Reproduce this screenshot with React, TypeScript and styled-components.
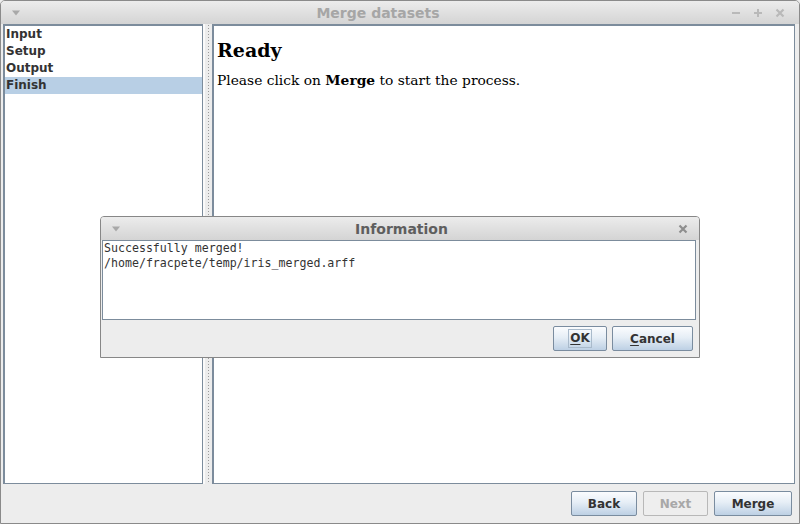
import React from "react";
import styled, { createGlobalStyle } from "styled-components";

const Global = createGlobalStyle`
  html, body { margin: 0; padding: 0; background: #ededed; }
  * { box-sizing: border-box; }
`;

const Window = styled.div`
  position: relative;
  width: 800px;
  height: 524px;
  display: flex;
  flex-direction: column;
  background: #ededed;
  border: 1px solid #8a8a8a;
  border-radius: 5px 5px 0 0;
  overflow: hidden;
  font-family: "DejaVu Sans", sans-serif;
`;

const TitleBar = styled.div<{ $h: number }>`
  height: ${(p) => p.$h}px;
  flex: none;
  display: flex;
  align-items: center;
  background: linear-gradient(#ececec, #d4d4d4);
`;

const MenuSlot = styled.div`
  width: 30px;
  flex: none;
  display: flex;
  justify-content: center;
  align-items: center;
`;

const Title = styled.div<{ $active?: boolean }>`
  flex: 1;
  text-align: center;
  font-size: 14px;
  font-weight: bold;
  color: ${(p) => (p.$active ? "#5e5e5e" : "#a6a6a6")};
  white-space: nowrap;
`;

const Controls = styled.div<{ $pr: number }>`
  flex: none;
  display: flex;
  padding-right: ${(p) => p.$pr}px;
`;

const CtrlBtn = styled.div`
  width: 22px;
  height: 22px;
  display: flex;
  align-items: center;
  justify-content: center;
`;

const Body = styled.div`
  height: 460px;
  flex: none;
  display: flex;
  padding: 0 4px 0 2px;
`;

const ListPanel = styled.div`
  width: 200px;
  flex: none;
  background: #fff;
  border: 1px solid #7c8c9c;
  border-left-width: 2px;
  border-top-width: 2px;
`;

const ListItem = styled.div<{ $selected?: boolean }>`
  height: 17px;
  line-height: 17px;
  padding-left: 1px;
  font-size: 12px;
  font-weight: bold;
  color: #333;
  background: ${(p) => (p.$selected ? "#b8cfe5" : "transparent")};
`;

const Divider = styled.div`
  width: 9px;
  flex: none;
  border-left: 2px solid #fafafa;
  display: flex;
  justify-content: center;
  background: #ececec;
`;

const Dots = styled.div`
  width: 1px;
  margin-left: -1px;
  background: repeating-linear-gradient(to bottom, transparent 0 1px, #9a9a9a 1px 2px, transparent 2px 3px);
`;

const ContentPanel = styled.div`
  flex: 1;
  background: #fff;
  border: 1px solid #7c8c9c;
  border-left-width: 2px;
  border-top-width: 2px;
  padding-left: 3px;
  font-family: "DejaVu Serif", serif;
  color: #000;
`;

const Heading = styled.h2`
  margin: 13px 0 0 0;
  font-size: 19px;
  line-height: 22px;
  font-weight: bold;
`;

const Para = styled.p`
  margin: 11px 0 0 0;
  font-size: 13.8px;
  line-height: 17px;
`;

const ButtonBar = styled.div<{ $pt: number; $pr: number; $gap: number }>`
  flex: 1;
  display: flex;
  justify-content: flex-end;
  align-items: flex-start;
  gap: ${(p) => p.$gap}px;
  padding: ${(p) => p.$pt}px ${(p) => p.$pr}px 0 0;
`;

const Button = styled.div<{ $w: number; $disabled?: boolean }>`
  width: ${(p) => p.$w}px;
  height: 25px;
  flex: none;
  display: flex;
  align-items: center;
  justify-content: center;
  font-size: 12px;
  font-weight: bold;
  border-radius: 2px;
  color: ${(p) => (p.$disabled ? "#a8a8a8" : "#333")};
  border: 1px solid ${(p) => (p.$disabled ? "#b8b8b8" : "#7a8c9f")};
  background: ${(p) =>
    p.$disabled ? "#eeeeee" : "linear-gradient(#fbfcfe 0%, #e6eef6 45%, #bdd0e4 100%)"};
`;

const Focus = styled.span`
  padding: 0 1px;
  border: 1px solid #a9bacb;
  line-height: 17px;
`;

const Mn = styled.span`
  text-decoration: underline;
  text-underline-offset: 2px;
`;

const Dialog = styled.div`
  position: absolute;
  left: 99px;
  top: 215px;
  width: 600px;
  height: 142px;
  display: flex;
  flex-direction: column;
  background: #ededed;
  border: 1px solid #878787;
  border-radius: 4px 4px 0 0;
  overflow: hidden;
`;

const DialogBody = styled.div`
  flex: 1;
  display: flex;
  flex-direction: column;
  padding: 0 3px 0 1px;
`;

const TextArea = styled.div`
  height: 80px;
  flex: none;
  background: #fff;
  border: 1px solid #7c8c9c;
  padding-left: 1px;
  font-family: "DejaVu Sans Mono", monospace;
  font-size: 11.6px;
  line-height: 15px;
  color: #333;
  white-space: pre;
`;

const Tri = () => (
  <svg width="10" height="6" viewBox="0 0 10 6">
    <path d="M1 0.5 L9 0.5 L5 5.5 Z" fill="#a8a8a8" />
  </svg>
);

const Minus = ({ c }: { c: string }) => (
  <svg width="10" height="10" viewBox="0 0 10 10">
    <path d="M1 5 H9" stroke={c} strokeWidth="2" />
  </svg>
);
const Plus = ({ c }: { c: string }) => (
  <svg width="10" height="10" viewBox="0 0 10 10">
    <path d="M1 5 H9 M5 1 V9" stroke={c} strokeWidth="2" />
  </svg>
);
const Close = ({ c }: { c: string }) => (
  <svg width="10" height="10" viewBox="0 0 10 10">
    <path d="M1.5 1.5 L8.5 8.5 M8.5 1.5 L1.5 8.5" stroke={c} strokeWidth="2.2" />
  </svg>
);

export default function App() {
  return (
    <>
      <Global />
      <Window>
        <TitleBar $h={23}>
          <MenuSlot>
            <Tri />
          </MenuSlot>
          <Title>Merge datasets</Title>
          <Controls $pr={8}>
            <CtrlBtn>
              <Minus c="#b9b9b9" />
            </CtrlBtn>
            <CtrlBtn>
              <Plus c="#b9b9b9" />
            </CtrlBtn>
            <CtrlBtn>
              <Close c="#b9b9b9" />
            </CtrlBtn>
          </Controls>
        </TitleBar>
        <Body>
          <ListPanel>
            <ListItem>Input</ListItem>
            <ListItem>Setup</ListItem>
            <ListItem>Output</ListItem>
            <ListItem $selected>Finish</ListItem>
          </ListPanel>
          <Divider>
            <Dots />
          </Divider>
          <ContentPanel>
            <Heading>Ready</Heading>
            <Para>
              Please click on <b>Merge</b> to start the process.
            </Para>
          </ContentPanel>
        </Body>
        <ButtonBar $pt={7} $pr={7} $gap={6}>
          <Button $w={66}>Back</Button>
          <Button $w={65} $disabled>
            Next
          </Button>
          <Button $w={78}>Merge</Button>
        </ButtonBar>

        <Dialog>
          <TitleBar $h={23}>
            <MenuSlot>
              <Tri />
            </MenuSlot>
            <Title $active>Information</Title>
            <Controls $pr={5}>
              <CtrlBtn>
                <Close c="#8e8e8e" />
              </CtrlBtn>
            </Controls>
          </TitleBar>
          <DialogBody>
            <TextArea>{"Successfully merged!\n/home/fracpete/temp/iris_merged.arff"}</TextArea>
            <ButtonBar $pt={6} $pr={3} $gap={5}>
              <Button $w={54}>
                <Focus>
                  <Mn>O</Mn>K
                </Focus>
              </Button>
              <Button $w={81}>
                <span>
                  <Mn>C</Mn>ancel
                </span>
              </Button>
            </ButtonBar>
          </DialogBody>
        </Dialog>
      </Window>
    </>
  );
}
